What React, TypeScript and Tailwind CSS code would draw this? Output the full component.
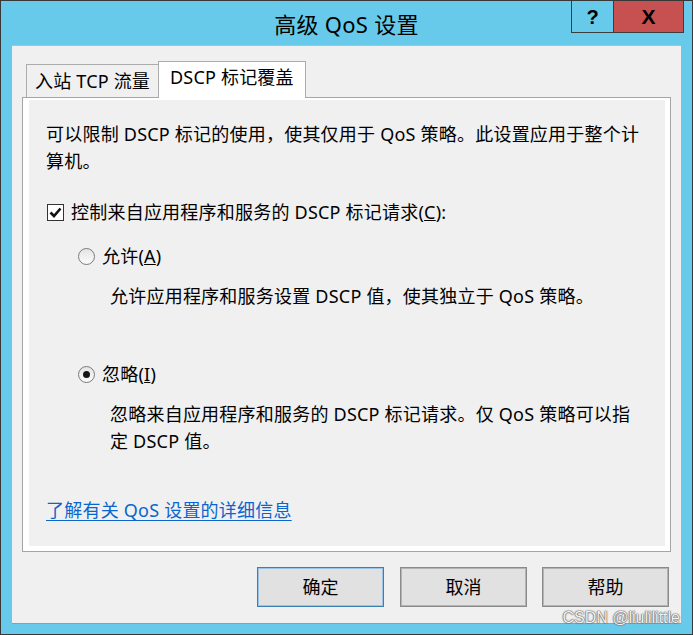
import React from "react";

function Checkbox() {
  return (
    <div className="ml-[1px] w-[17px] h-[17px] border border-[#333333] bg-white flex items-center justify-center shrink-0">
      <svg width="15" height="15" viewBox="0 0 15 15">
        <path d="M2.5 7.5 L6 11 L12.5 3.5" fill="none" stroke="#111" strokeWidth="2.6" />
      </svg>
    </div>
  );
}

function Radio({ checked }: { checked?: boolean }) {
  return (
    <div className="ml-[32px] w-[17px] h-[17px] rounded-full border border-[#7a7a7a] bg-linear-to-b from-[#e4e4e4] to-[#fbfbfb] flex items-center justify-center shrink-0">
      {checked ? <div className="w-[7px] h-[7px] rounded-full bg-[#141414]" /> : null}
    </div>
  );
}

export default function App() {
  return (
    <div className="relative w-[693px] h-[635px] bg-[#67caea] border border-[#383838] flex flex-col font-['Noto_Sans','Noto_Sans_CJK_SC',sans-serif] text-black">
      {/* title bar */}
      <div className="h-[45px] grid grid-cols-[1fr_auto_1fr]">
        <div />
        <div className="flex items-center pt-[1px] text-[22px] leading-none whitespace-nowrap tracking-[0.3px]">
          高级 QoS 设置
        </div>
        <div className="flex justify-end items-start pr-[8px]">
          <div className="w-[42px] h-[32px] border-l border-b border-[#3c3c3c] flex items-center justify-center font-['Liberation_Sans',sans-serif] font-bold text-[20px] leading-none">
            ?
          </div>
          <div className="w-[71px] h-[32px] border-l border-r border-b border-[#3c3c3c] bg-[#c75050] flex items-center justify-center font-['Liberation_Sans',sans-serif] font-bold text-[21px] leading-none">
            X
          </div>
        </div>
      </div>

      {/* client area */}
      <div className="mx-[11px] h-[577px] bg-[#f0f0f0] flex flex-col pl-[10px] pr-[10px] pt-[15px] shadow-[0_1px_0_#8f9ea6,0_-1px_0_#a3c3d1]">
        {/* tabs */}
        <div className="flex items-end ml-[4px] mb-[-1px] relative z-10 text-[18px] leading-[27px] tracking-[0.2px]">
          <div className="w-[132px] h-[33px] mb-[1px] border-l border-t border-[#acacac] bg-[#f0f0f0] pl-[8px] pt-[3px] whitespace-nowrap">
            入站 TCP 流量
          </div>
          <div className="w-[148px] h-[37px] border-l border-t border-r border-[#acacac] bg-white pl-[11px] pt-[2px] whitespace-nowrap">
            DSCP 标记覆盖
          </div>
        </div>

        {/* panel */}
        <div className="w-[649px] h-[455px] border border-[#a5a5a5] bg-white pt-[2px] pl-[6px] pr-[5px] pb-[5px] flex">
          <div className="flex-1 bg-[#f0f0f0] pl-[17px] pt-[21px] text-[18px] leading-[27px] whitespace-nowrap tracking-[0.22px]">
            <p>
              可以限制 DSCP 标记的使用，使其仅用于 QoS 策略。此设置应用于整个计
              <br />
              算机。
            </p>

            <div className="mt-[24px] h-[27px] flex items-center gap-[7px]">
              <Checkbox />
              <span>
                控制来自应用程序和服务的 DSCP 标记请求(<span className="underline">C</span>):
              </span>
            </div>

            <div className="mt-[17px] h-[27px] flex items-center gap-[7px]">
              <Radio />
              <span>
                允许(<span className="underline">A</span>)
              </span>
            </div>

            <p className="mt-[13px] pl-[64px]">允许应用程序和服务设置 DSCP 值，使其独立于 QoS 策略。</p>

            <div className="mt-[51px] h-[27px] flex items-center gap-[7px]">
              <Radio checked />
              <span>
                忽略(<span className="underline">I</span>)
              </span>
            </div>

            <p className="mt-[13px] pl-[64px]">
              忽略来自应用程序和服务的 DSCP 标记请求。仅 QoS 策略可以指
              <br />
              定 DSCP 值。
            </p>

            <p className="mt-[42px]">
              <span className="text-[#0a66cc] underline underline-offset-[3px]">了解有关 QoS 设置的详细信息</span>
            </p>
          </div>
        </div>

        {/* buttons */}
        <div className="mt-[15px] flex justify-end gap-[15px] pr-[2px] text-[18px]">
          <button className="w-[127px] h-[40px] mr-[1px] bg-[#e1e1e1] border border-[#3c7fb1] shadow-[inset_0_0_0_1px_#9cc3e6] flex items-center justify-center">
            确定
          </button>
          <button className="w-[127px] h-[40px] bg-[#e1e1e1] border border-[#8a8a8a] shadow-[inset_0_0_0_1px_#b4b4b4] flex items-center justify-center">
            取消
          </button>
          <button className="w-[127px] h-[40px] bg-[#e1e1e1] border border-[#8a8a8a] shadow-[inset_0_0_0_1px_#b4b4b4] flex items-center justify-center">
            帮助
          </button>
        </div>
      </div>

      <div className="absolute right-[12px] top-[607px] font-['Liberation_Sans',sans-serif] text-[16px] leading-[20px] text-[#f2f2f2] [text-shadow:0_0_1px_#555,0_0_1px_#555,0_0_2px_#777] whitespace-nowrap">
        CSDN @liulilittle
      </div>
    </div>
  );
}
